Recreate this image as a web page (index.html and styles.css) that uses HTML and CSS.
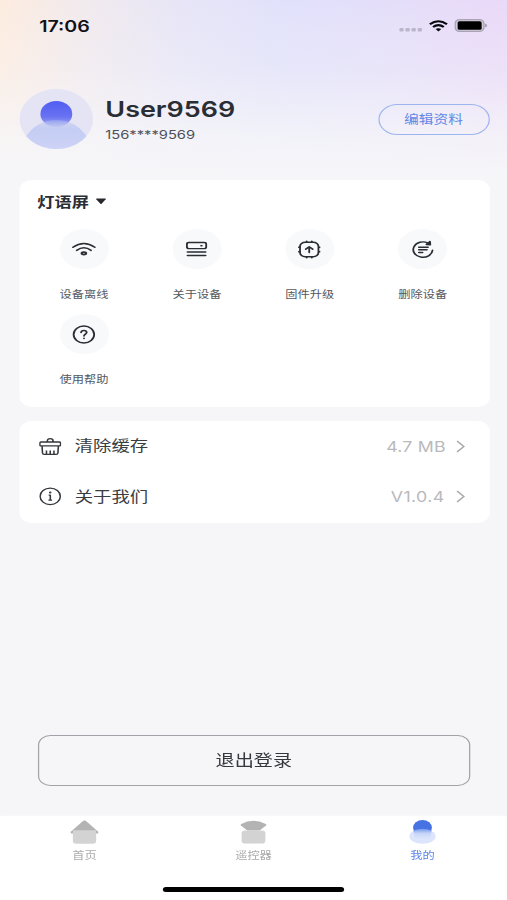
FILE: index.html
```html
<!DOCTYPE html>
<html lang="zh-CN">
<head>
<meta charset="utf-8">
<meta name="viewport" content="width=device-width">
<title>我的</title>
<link rel="stylesheet" href="styles.css">
</head>
<body>
<div class="app">
  <header class="status">
    <span class="time">17:06</span>
    <span class="signals">
      <svg class="dots" width="19" height="4" viewBox="0 0 19 4"><g fill="#bbb6cb"><rect width="3.6" height="3.4" rx="1"/><rect x="5" width="3.6" height="3.4" rx="1"/><rect x="10" width="3.6" height="3.4" rx="1"/><rect x="15" width="3.6" height="3.4" rx="1"/></g></svg>
      <svg class="wifi" width="16" height="12" viewBox="0 0 16 12" fill="none" stroke="#08080c" stroke-width="2"><path d="M1 4.2Q8-1.8 15 4.2M3.6 7Q8 3.3 12.4 7"/><path d="M5.7 9.1Q8 7.3 10.3 9.1L8 11.5Z" fill="#08080c" stroke="none"/></svg>
      <svg width="27" height="13" viewBox="0 0 27 13"><rect x=".7" y=".7" width="23.4" height="11.6" rx="3.5" fill="#d3cbdc" stroke="#aaa3b5" stroke-width="1.2"/><rect x="2.7" y="2.2" width="19.6" height="8.6" rx="1.5" fill="#000"/><path d="M25 4.5q1.8.4 1.8 2T25 8.5Z" fill="#aaa3b5"/></svg>
    </span>
  </header>

  <section class="profile">
    <svg class="avatar" viewBox="0 0 60 60">
      <defs>
        <linearGradient id="head" x2="0" y2="1"><stop stop-color="#515df2"/><stop offset=".6" stop-color="#6872f2"/><stop offset="1" stop-color="#a6b1f0"/></linearGradient>
        <linearGradient id="body" x2="0" y2="1"><stop stop-color="#b9c3f0" stop-opacity=".35"/><stop offset=".3" stop-color="#c4cdf3"/><stop offset="1" stop-color="#cfd3f7"/></linearGradient>
        <clipPath id="round"><circle cx="30" cy="30" r="30"/></clipPath>
      </defs>
      <circle cx="30" cy="30" r="30" fill="#e4e4f5"/>
      <g clip-path="url(#round)"><circle cx="30" cy="25" r="13" fill="url(#head)"/><path d="M5 48Q14 31 30 31T55 48V62H5Z" fill="url(#body)"/></g>
    </svg>
    <div class="who"><h1>User9569</h1><p>156****9569</p></div>
    <button class="edit">编辑资料</button>
  </section>

  <section class="card device">
    <h2>灯语屏 <svg width="9" height="7" viewBox="0 0 9 7"><path d="M.5 1Q.5.5 1 .5H8Q8.7.6 8.3 1.3L5 5.7Q4.5 6.2 4 5.7L.7 1.4Z" fill="#25282d"/></svg></h2>
    <div class="grid">
      <div class="tool"><i><svg viewBox="0 0 24 24"><path d="M1.8 9.5Q12 .6 22.2 9.5M5.3 13Q12 7.2 18.7 13"/><ellipse cx="12" cy="16.4" rx="2.1" ry="1.4" stroke-width="2"/></svg></i><span>设备离线</span></div>
      <div class="tool"><i><svg viewBox="0 0 24 24"><rect x="3" y="4" width="18" height="7" rx="1.8"/><path d="M16.2 7.7H17M3.5 14.8H20.5M3.5 18.8H20.5"/></svg></i><span>关于设备</span></div>
      <div class="tool"><i><svg viewBox="0 0 24 24"><rect x="3.4" y="3.8" width="17.2" height="16.4" rx="4.8"/><path d="M9.6 2.6V3.5M14.4 2.6V3.5M9.6 20.5V21.4M14.4 20.5V21.4M2.3 9.5H3M2.3 14.5H3M21 9.5H21.7M21 14.5H21.7M12 15.5V9M8.8 11.6L12 8.8L15.2 11.6"/></svg></i><span>固件升级</span></div>
      <div class="tool"><i><svg viewBox="0 0 24 24"><path d="M16.5 4.6A9 8.8 0 1 0 20.8 12.8M8 9.3H16.6M8 12.3H15.6M8 15.3H11.5"/><path d="M18.4 2.8L18.7 6.5L15 6.2Z" fill="#292d34"/></svg></i><span>删除设备</span></div>
      <div class="tool"><i><svg viewBox="0 0 24 24"><circle cx="12" cy="12" r="9.6"/><path d="M9.4 9.8Q9.5 7.5 12 7.5T14.6 9.7C14.6 11.5 12.1 11.6 12.1 13.6M12.1 16.3V16.6"/></svg></i><span>使用帮助</span></div>
    </div>
  </section>

  <section class="card list">
    <div class="row">
      <svg class="lead" viewBox="0 0 20 20"><path d="M7.4 5V3.8Q7.4 1.3 10 1.3T12.6 3.8V5M1.6 5H18.4Q19.4 5 19.4 6V8.4Q19.4 9.4 18.4 9.4H1.6Q.6 9.4 .6 8.4V6Q.6 5 1.6 5ZM2.6 9.6L3 17.3Q3.1 18.8 4.6 18.8H15.4Q16.9 18.8 17 17.3L17.4 9.6M6.6 18.5V14.5M10 18.5V14.5M13.4 18.5V14.5"/></svg>
      <span>清除缓存</span><b>4.7 MB</b>
      <svg class="next" viewBox="0 0 8 14"><path d="M1 1L7 7L1 13"/></svg>
    </div>
    <div class="row">
      <svg class="lead" viewBox="0 0 20 20"><circle cx="10" cy="9.8" r="9.2"/><path d="M8.6 8.4H10.1V13.8M8.4 14H11.7"/><circle cx="10" cy="5.6" r=".5" fill="#34373c"/></svg>
      <span>关于我们</span><b class="version">V1.0.4</b>
      <svg class="next" viewBox="0 0 8 14"><path d="M1 1L7 7L1 13"/></svg>
    </div>
  </section>

  <button class="logout">退出登录</button>

  <nav class="tabs">
    <div class="tab"><svg viewBox="0 0 24 24"><path d="M11 .8Q12 0 13 .8L23 11.5Q24 13.5 22 13.5H2Q0 13.5 1 11.5Z" fill="#b3b3b3"/><path d="M2.5 10.3H21.5V21Q21.5 23.7 19 23.7H5Q2.5 23.7 2.5 21Z" fill="#d3d3d3"/></svg><span>首页</span></div>
    <div class="tab"><svg viewBox="0 0 24 24"><path d="M2 4.1Q12-2.8 22 4.1Q23 5 22 5.8L17 10.5H7L2 5.8Q1 5 2 4.1Z" fill="#b3b3b3"/><rect x="2.3" y="10.5" width="19.4" height="13" rx="2.8" fill="#d3d3d3"/></svg><span>遥控器</span></div>
    <div class="tab active"><svg viewBox="0 0 24 24"><defs><linearGradient id="veil" x2="0" y2="1"><stop stop-color="#7196ec"/><stop offset=".45" stop-color="#c5d4f8"/><stop offset="1" stop-color="#dce5fc"/></linearGradient></defs><ellipse cx="12" cy="16.5" rx="10.7" ry="7.3" fill="#dce5fc"/><circle cx="12" cy="7.8" r="7.7" fill="#4772e4"/><path d="M4.5 10.8Q8 8.7 12 8.7T19.5 10.8L18.5 17Q12 21 5.5 17Z" fill="url(#veil)"/></svg><span>我的</span></div>
  </nav>
  <div class="home"></div>
</div>
</body>
</html>
```
FILE: styles.css
```css
* { box-sizing: border-box; }
html, body { margin: 0; height: 900px; overflow: hidden; background: #f6f6f9; }
h1, h2, p { margin: 0; }
button { padding: 0; background: transparent; font-family: inherit; }
svg { display: block; flex: none; }

/* 414pt layout stretched to the 507px viewport */
.app {
  width: 414px;
  height: 900px;
  transform: scaleX(1.22464);
  transform-origin: 0 0;
  display: flex;
  flex-direction: column;
  font-family: Inter, "Noto Sans CJK SC", sans-serif;
  color: #292d34;
  background:
    linear-gradient(180deg, rgba(246,246,249,0) 0, rgba(246,246,249,.28) 70px, rgba(246,246,249,.8) 135px, #f6f6f9 178px),
    linear-gradient(90deg, #fdecdf 0, #f1eaee 70px, #e7e5f7 150px, #e1e1fb 230px, #e5def9 330px, #ead9f8 414px);
}

.status { height: 52px; padding: 0 16px 0 32px; display: flex; justify-content: space-between; align-items: center; }
.time { font-size: 16px; font-weight: 600; color: #111217; }
.signals { display: flex; align-items: center; gap: 4.5px; padding-right: .5px; }
.signals .wifi { margin: 0 .5px 1px 0; }
.signals .dots { margin: 8px 0 0; }
.signals svg:last-child { margin-bottom: 1px; }

.profile { height: 128px; padding: 37px 15px 0 16px; display: flex; align-items: flex-start; }
.avatar { width: 60px; height: 60px; }
.who { flex: 1; padding: 7px 0 0 10px; }
.who h1 { font-size: 22px; line-height: 27px; font-weight: 600; }
.who p { font-size: 12px; line-height: 16px; margin-top: 4px; color: #4c4f57; }
.edit { width: 91px; height: 31px; margin-top: 15px; margin-right: -.5px; border: 1px solid #9db5ee; border-radius: 16px; color: #5f87e6; font-size: 12px; line-height: 29px; }

.card { margin: 0 14.5px 0 16px; background: #fff; border-radius: 10px; }
.device { height: 227px; padding: 12px 6.5px 0; }
.device h2 { height: 20px; padding-left: 8px; display: flex; align-items: center; gap: 5px; font-size: 14px; line-height: 20px; font-weight: 700; }
.device h2 svg { margin-bottom: 1px; }
.grid { display: grid; grid-template-columns: repeat(4, 92.2px); grid-auto-rows: 85px; padding-top: 17px; }
.tool { display: flex; flex-direction: column; align-items: center; }
.tool i { width: 40px; height: 40px; border-radius: 50%; background: #f7f9fb; display: grid; place-items: center; }
.tool svg { width: 21px; height: 21px; fill: none; stroke: #292d34; stroke-width: 1.7; stroke-linecap: round; stroke-linejoin: round; }
.tool span { margin-top: 18px; font-size: 10px; line-height: 14px; color: #55585e; }

.list { height: 102px; margin-top: 14px; }
.row { height: 50.5px; padding: 0 20px 0 15.5px; display: flex; align-items: center; }
.lead { width: 18px; height: 19px; fill: none; stroke: #34373c; stroke-width: 1.4; stroke-linejoin: round; }
.row span { flex: 1; padding-left: 11.5px; font-size: 15px; line-height: 22px; color: #3a3d42; }
.row b { font-size: 14.5px; font-weight: 400; letter-spacing: .15px; color: #b9b9bd; }
.row .version { margin-right: 1px; letter-spacing: .3px; }
.next { width: 8px; height: 13px; margin-left: 7.5px; fill: none; stroke: #a9a9ad; stroke-width: 1.4; }

.logout { flex: none; height: 51px; margin: 212px 30px 0 30.5px; border: 1px solid #a2a3a8; border-radius: 10px; color: #34373c; font-size: 15.6px; line-height: 49px; }

.tabs { height: 84px; margin-top: 30px; flex: none; background: #fff; display: grid; grid-template-columns: repeat(3, 1fr); padding-top: 4px; box-shadow: 0 0 3px #fbfbfd; }
.tab { display: flex; flex-direction: column; align-items: center; }
.tab svg { width: 24px; height: 24px; }
.tab span { margin-top: 4px; font-size: 10px; line-height: 14px; color: #aaa; }
.tab.active span { color: #5d84e8; }
.home { width: 147.5px; height: 5px; margin: -13px auto 0; flex: none; border-radius: 3px; background: #000; }
```
